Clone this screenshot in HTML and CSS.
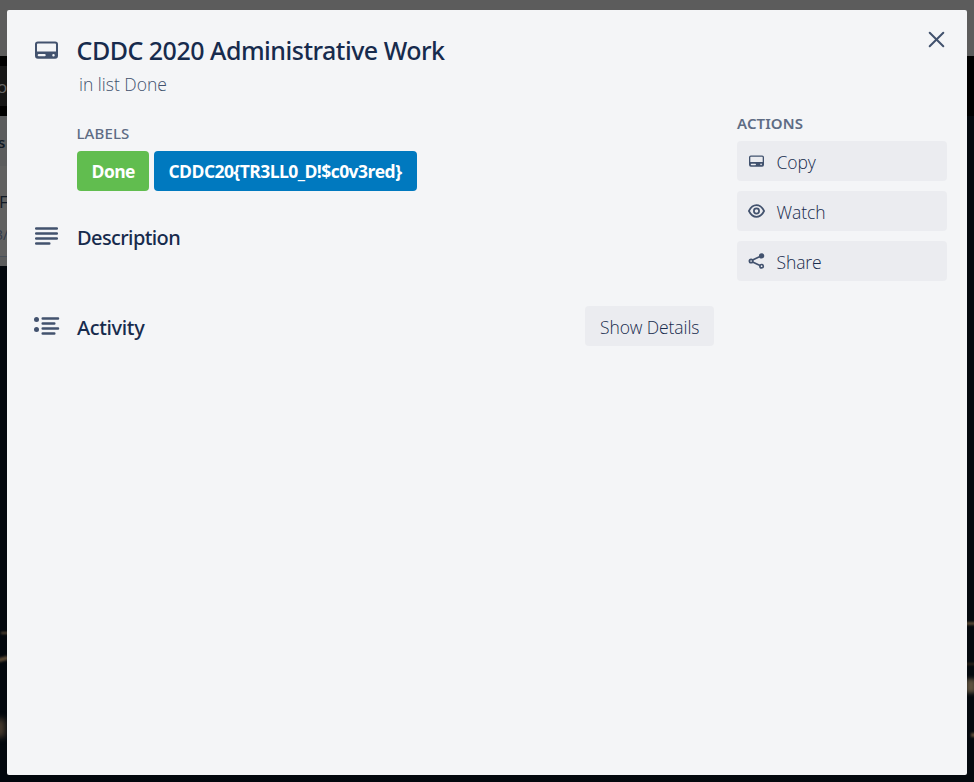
FILE: index.html
```html
<!DOCTYPE html>
<html lang="en">
<head>
<meta charset="utf-8">
<title>CDDC 2020 Administrative Work</title>
<link rel="stylesheet" href="styles.css">
</head>
<body>
<div class="board">
  <div class="topbar"></div>
  <div class="boardbar"><span class="board-name">o</span></div>
  <div class="list"><b class="list-title">s</b><div class="list-card"><span class="card-name">F</span><span class="card-badge">3/</span></div></div>
  <i class="light l1"></i><i class="light l2"></i><i class="light l3"></i>
  <i class="light r1"></i><i class="light r2"></i><i class="light r3"></i><i class="light r4"></i>
</div>
<svg class="defs" width="0" height="0">
  <symbol id="card" viewBox="0 0 24 18">
    <path fill="currentColor" fill-rule="evenodd" d="M3 0H21Q24 0 24 3V15Q24 18 21 18H3Q0 18 0 15V3Q0 0 3 0ZM3 2.100Q2.100 2.100 2.100 3V10.500H21.900V3Q21.900 2.100 21 2.100ZM4 13.200A1.200 1.200 0 0 0 4 15.600H10A1.200 1.200 0 0 0 10 13.200ZM19.300 13.100A1.300 1.300 0 1 0 19.300 15.700A1.300 1.300 0 1 0 19.300 13.100Z"/>
  </symbol>
</svg>
<div class="window">
  <button class="close" aria-label="Close"><svg width="17" height="17" viewBox="0 0 17 17"><path d="M1.7 1.7L15.3 15.3M15.3 1.7L1.7 15.3"/></svg></button>
  <header class="head">
    <svg class="head-icon" width="23" height="18"><use href="#card"/></svg>
    <div>
      <h2 class="title">CDDC 2020 Administrative Work</h2>
      <p class="sub">in list Done</p>
    </div>
  </header>
  <div class="columns">
    <main class="main">
      <h3 class="caption labels-cap">LABELS</h3>
      <div class="labels"><span class="label green">Done</span><span class="label blue">CDDC20{TR3LL0_D!$c0v3red}</span></div>
      <section class="section description">
        <svg class="icon" width="28" height="20" viewBox="0 0 28 20"><path d="M2.200 2.500H22.800M2.200 7.500H22.800M2.200 12.500H22.800M2.200 17.500H15.300"/></svg>
        <h3 class="heading">Description</h3>
      </section>
      <section class="section activity">
        <svg class="icon" width="28" height="20" viewBox="0 0 28 20"><path d="M8.700 2.500H24M8.700 7.500H20.300M8.700 12.500H24M8.700 17.500H20.300"/><circle cx="2.500" cy="3.600" r="2.500"/><circle cx="2.500" cy="13.600" r="2.500"/></svg>
        <h3 class="heading act">Activity</h3>
        <button class="button details"><span>Show Details</span></button>
      </section>
    </main>
    <aside class="side">
      <h3 class="caption actions-cap">ACTIONS</h3>
      <button class="button"><svg class="small" width="17" height="20" viewBox="0 0 17 20"><use href="#card" x="1" y="4" width="15" height="12"/></svg><span>Copy</span></button>
      <button class="button"><svg class="small line" width="17" height="20" viewBox="0 0 17 20"><path d="M.9 10C3 5.800 5.500 4.200 8.500 4.200S14 5.800 16.100 10C14 14.200 11.500 15.800 8.500 15.800S3 14.200 .9 10Z"/><circle cx="8.500" cy="10" r="2.600"/></svg><span>Watch</span></button>
      <button class="button"><svg class="small line" width="17" height="20" viewBox="0 0 17 20"><path d="M4.600 9.100L12 5.600M4.600 10.900L12 14.400"/><circle cx="3.100" cy="10" r="1.700"/><circle cx="13.600" cy="15.200" r="1.700"/><circle class="solid" cx="13.600" cy="4.900" r="1.800"/></svg><span>Share</span></button>
    </aside>
  </div>
</div>
</body>
</html>
```
FILE: styles.css
```css
* { box-sizing: border-box; margin: 0; padding: 0; }
body { width: 974px; height: 782px; overflow: hidden; padding: 10px 7px 7px; position: relative; background: #02070d; font-family: "Open Sans", "Noto Sans", sans-serif; color: #172b4d; }
.defs { position: absolute; }
.board { position: absolute; inset: 0; overflow: hidden; background: linear-gradient(90deg, #02070d, #04090e); font-size: 17px; color: #111a26; }
.topbar { height: 56px; background: #5c5c5c; }
.boardbar { height: 60px; border: solid #000; border-width: 10px 0; background: linear-gradient(90deg, #161616 50%, #000 50%); color: #666; line-height: 41px; }
.board-name { margin-left: -3px; }
.list { width: 50%; height: 150px; background: #5b5c5d; }
.list-title { display: block; height: 50px; line-height: 52px; margin-left: -2px; font-weight: 600; font-size: 15px; }
.list-card { height: 91px; background: #606060; border-bottom: 1px solid #48505a; padding-top: 23px; }
.list-card span { display: block; line-height: 26px; margin-left: -1px; }
.list-card .card-badge { margin: 7px 0 0 -5px; font-size: 14px; color: #30394a; }
.light { position: absolute; background: #5b4a36; filter: blur(1px); width: 10px; }
.l1 { left: 1px; top: 632px; height: 2px; }
.l2 { left: -2px; top: 657px; height: 4px; transform: rotate(-15deg); }
.l3 { left: -5px; top: 719px; height: 18px; background: #4a3d30; filter: blur(3px); }
.r1 { left: 966px; top: 622px; height: 3px; }
.r2 { left: 966px; top: 663px; height: 2px; background: #33271c; }
.r3 { left: 966px; top: 679px; height: 14px; background: #5e5140; filter: blur(2px); }
.r4 { left: 971px; top: 733px; height: 4px; }
.window { position: relative; height: 765px; background: #f4f5f7; border-radius: 2px; padding: 24px 20px 0 27px; }
.close { position: absolute; right: 20px; top: 18px; width: 22px; height: 22px; border: 0; background: none; display: grid; place-items: center; }
.close path { stroke: #42526e; stroke-width: 2; stroke-linecap: round; }
.head { display: flex; gap: 19px; height: 79px; padding-left: 1px; }
.head-icon { color: #42526e; margin-top: 7px; }
.title { font: 500 25px/32px "Noto Sans", sans-serif; letter-spacing: -.5px; white-space: nowrap; margin-left: -.5px; }
.sub { margin: 6px 0 0 2px; font: 300 17.5px/24px "Open Sans", sans-serif; color: #42526e; white-space: nowrap; }
.columns { display: flex; gap: 23px; }
.main { width: 680px; padding-top: 10px; }
.side { width: 210px; }
.caption { font: 500 15px/20px "Noto Sans", sans-serif; color: #5e6c84; letter-spacing: .1px; white-space: nowrap; }
.labels-cap { margin-left: 42.5px; }
.actions-cap { font-weight: 600; margin-bottom: 8px; }
.labels { display: flex; gap: 5px; margin: 8px 0 0 43px; }
.label { height: 40px; border-radius: 4px; color: #fff; font: 700 17.5px/41px "Open Sans", sans-serif; letter-spacing: -.56px; padding-left: 14.5px; white-space: nowrap; }
.green { width: 72px; background: #61bd4f; }
.blue { width: 263px; background: #0079bf; }
.section { display: flex; align-items: center; height: 40px; gap: 15px; }
.description { margin-top: 27px; }
.activity { margin-top: 48px; }
.icon { position: relative; top: -2px; stroke: #42526e; stroke-width: 2.5; stroke-linecap: round; }
.activity .icon { top: 0; }
.icon circle { fill: #42526e; stroke: none; }
.heading { font: 500 20px/28px "Noto Sans", sans-serif; letter-spacing: -.6px; }
.heading.act { letter-spacing: -.35px; position: relative; top: 2px; }
.button { display: flex; align-items: center; width: 210px; height: 40px; margin-bottom: 10px; padding: 0 11px; gap: 11.5px; border: 0; border-radius: 4px; background: #ebecf0; color: #172b4d; font: 300 17.5px/24px "Open Sans", sans-serif; letter-spacing: -.1px; white-space: nowrap; }
.button span { position: relative; top: 1px; }
.details { width: 129px; margin: 0 0 0 auto; padding: 0 0 0 15px; }
.small { color: #42526e; }
.line { stroke: #42526e; stroke-width: 1.7; fill: none; }
.line .solid { fill: #42526e; }
```
